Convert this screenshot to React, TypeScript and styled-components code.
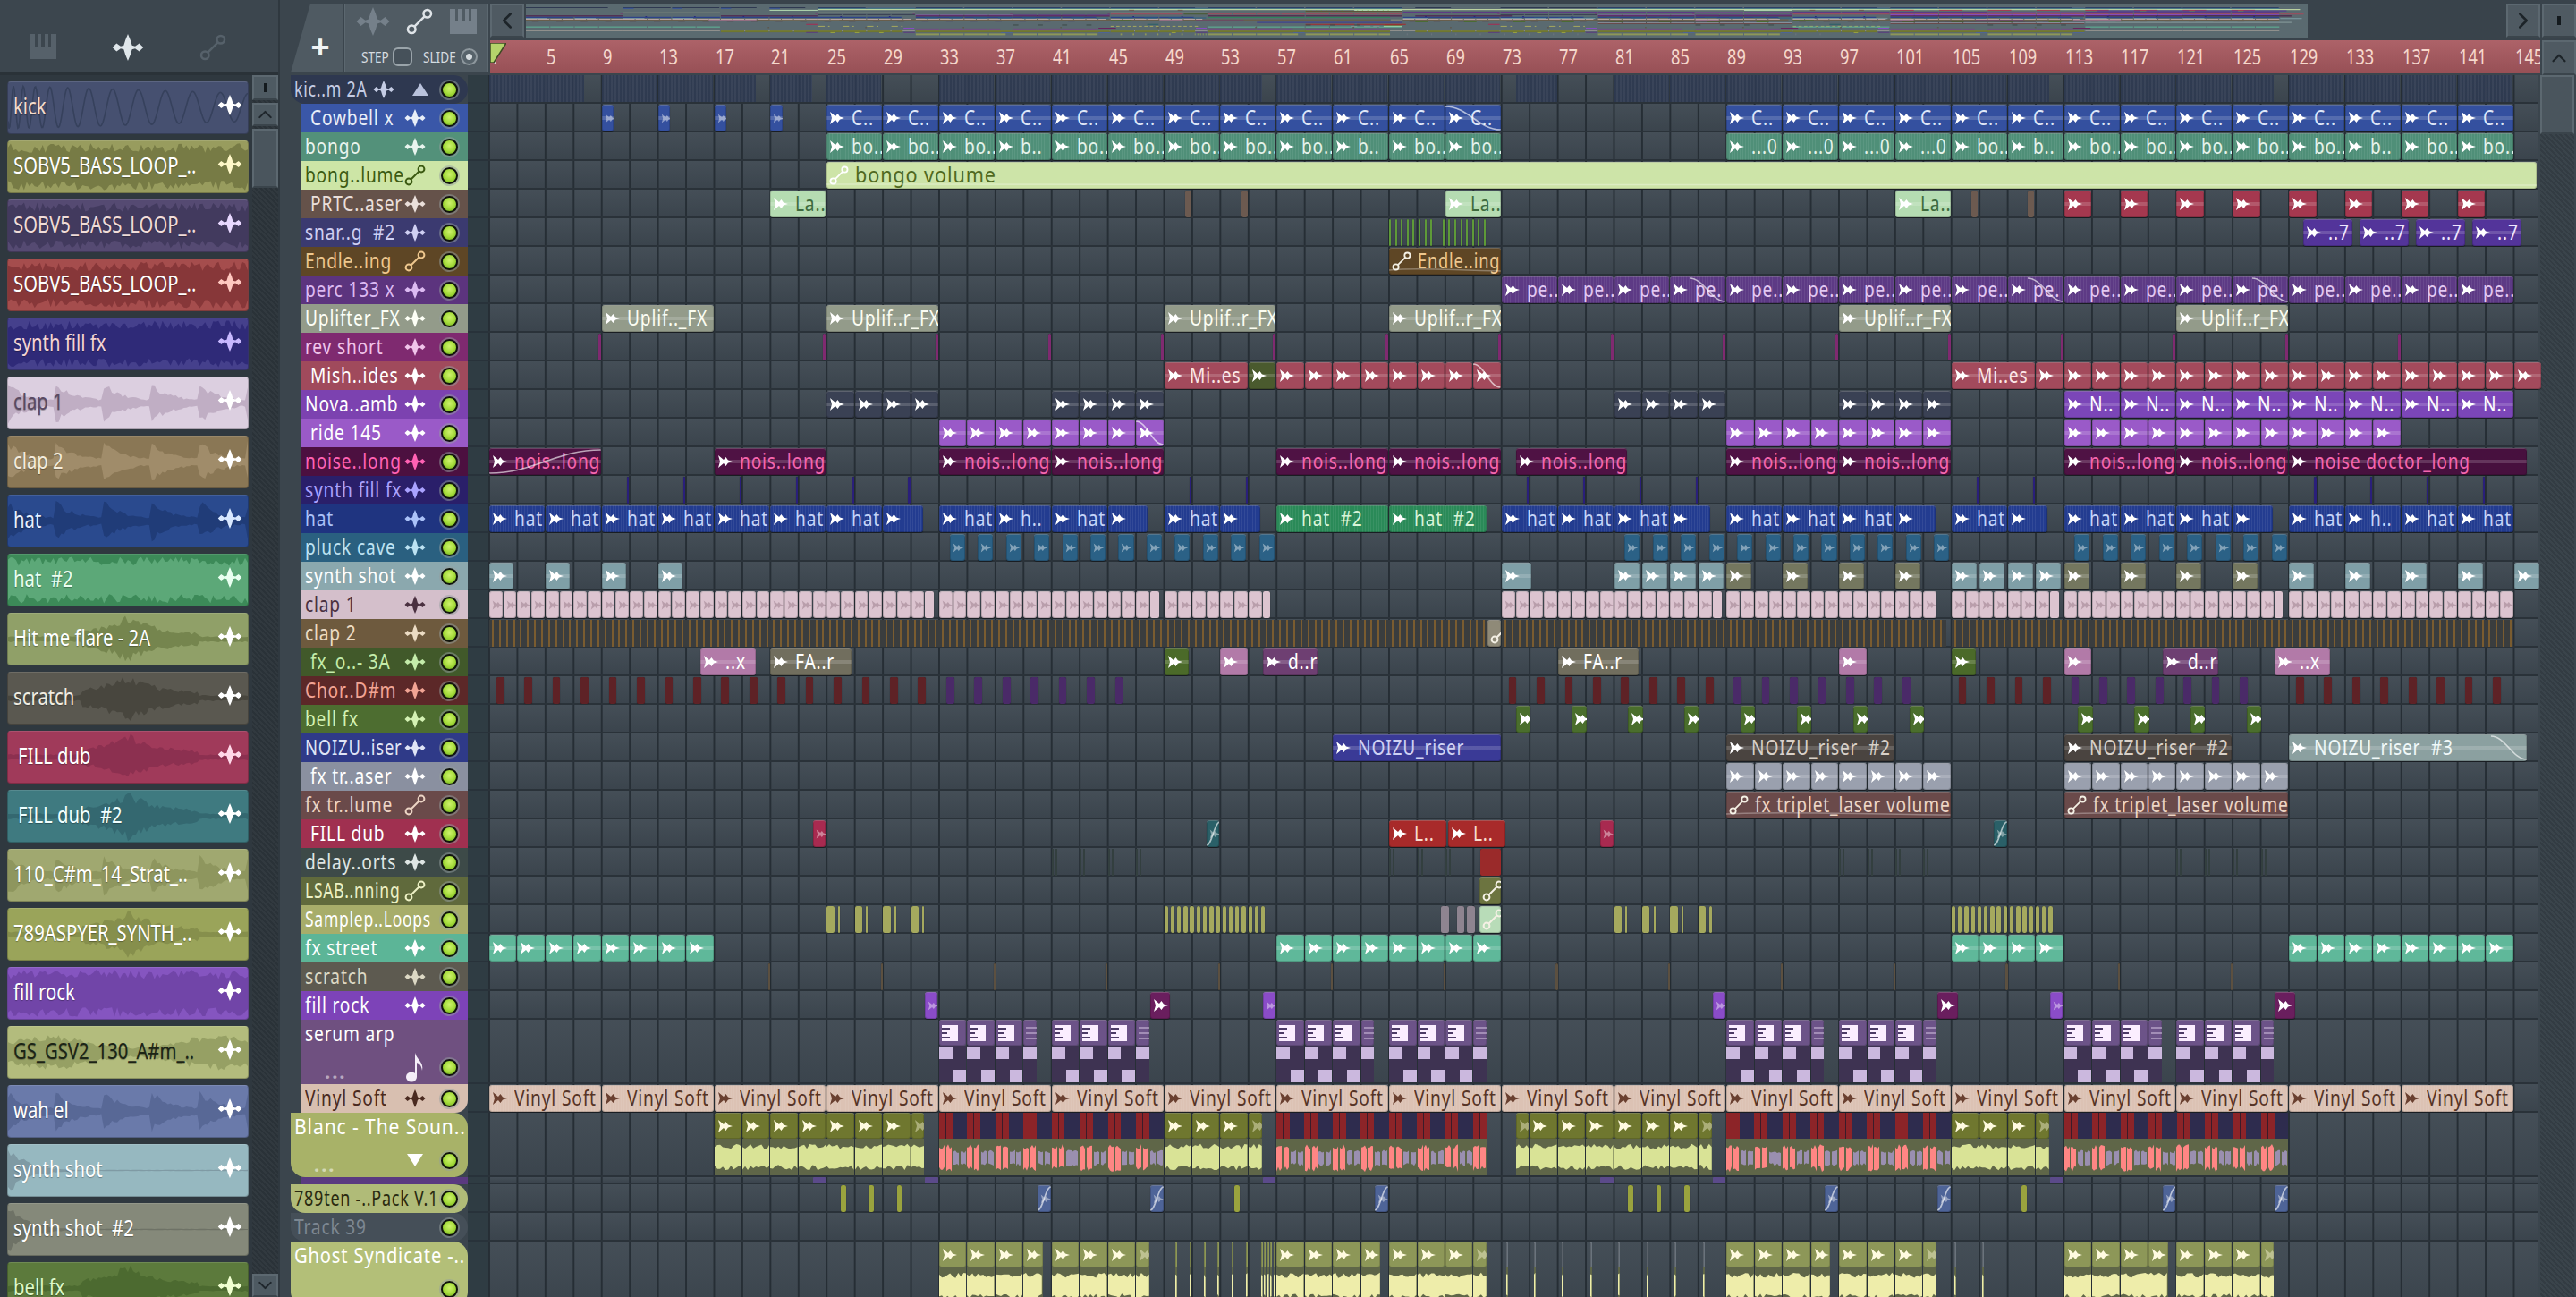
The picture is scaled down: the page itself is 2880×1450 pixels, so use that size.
import React, { FC } from 'react';
import styled, { createGlobalStyle } from 'styled-components';
import { ChevronDown, ChevronLeft, ChevronRight, ChevronUp } from 'lucide-react';

const BAR = 15.72;
const FONT = `'Noto Sans', 'Open Sans', sans-serif`;

type ClipKind = 'audio' | 'auto' | 'bar' | 'lines' | 'kick' | 'faint' | 'notes' | 'wave' | 'stripes' | 'tiny';
type CurveKind = 'down' | 'fall' | 'rise';

interface ClipData {
    b: number;
    l: number;
    t?: string;
    c?: string;
    f?: string;
    k?: ClipKind;
    curve?: CurveKind;
    dim?: boolean;
    sx?: number;
}

interface TrackData {
    name: string;
    sx?: number;
    bg: string;
    fg: string;
    icon?: 'wave' | 'auto' | 'note' | 'up' | 'down';
    indent?: boolean;
    group?: boolean;
    corner?: boolean;
    h?: number;
    dots?: boolean;
    clipBg?: string;
    clipFg?: string;
    tex?: 'stripes' | 'line';
    waveFill?: string;
    clips: ClipData[];
}

const rep = (b: number, n: number, step: number, l: number, extra: Partial<ClipData> = {}): ClipData[] =>
    Array.from({ length: n }, (_, i) => ({ b: b + i * step, l, ...extra }));

const at = (bars: number[], l: number, extra: Partial<ClipData> = {}): ClipData[] =>
    bars.map((b) => ({ b, l, ...extra }));

const labels = (b: number, names: string[], l: number): ClipData[] =>
    names.map((t, i) => ({ b: b + i * l, l, t }));

const RED = '#a5384f';
const TEAL = '#7f9fa7';
const OLIVE = '#74775f';
const PINK = '#b27aa8';
const GRAPE = '#6e3f72';
const DARK_GREEN = '#4b6a29';
const MAROON = '#5e2226';
const VIOLET = '#4a2a68';

const tracks: TrackData[] = [
    {
        name: 'kic..m 2A', sx: 0.74, bg: '#2e3850', fg: '#c4cce4', icon: 'up', group: true,
        clips: at([1], 6.8, { k: 'kick' }).concat(
            at([9, 13, 25, 33, 37, 41, 45, 49, 57, 61, 65, 69, 81, 85, 89, 93, 97, 101, 105, 113, 117, 121, 129, 133, 137, 141], 3.95, { k: 'kick' }),
            at([17, 21, 53, 74, 109, 125], 3, { k: 'kick' })
        )
    },
    {
        name: 'Cowbell x', bg: '#3a57a8', fg: '#e8eef8', indent: true, clipBg: '#34509f', clipFg: '#dfe7f8', tex: 'line',
        clips: [...at([9, 13, 17, 21], 0.92, { dim: true }), ...rep(25, 11, 4, 4, { t: 'C..' }), { b: 69, l: 4, t: 'C..', curve: 'fall' }, ...rep(89, 14, 4, 4, { t: 'C..' })]
    },
    {
        name: 'bongo', bg: '#53917a', fg: '#e8f4ee', clipBg: '#4f8f78', clipFg: '#e4f2ea', tex: 'stripes',
        clips: [
            ...labels(25, ['bo..', 'bo..', 'bo..', 'b..', 'bo..', 'bo..', 'bo..', 'bo..', 'bo..', 'b..', 'bo..', 'bo..'], 4),
            ...labels(89, ['...0', '...0', '...0', '...0', 'bo..', 'b..', 'bo..', 'bo..', 'bo..', 'bo..', 'bo..', 'b..', 'bo..', 'bo..'], 4)
        ]
    },
    {
        name: 'bong..lume', bg: '#cde5a6', fg: '#3c5a12', icon: 'auto', clipBg: '#cde4a8', clipFg: '#50691f',
        clips: [{ b: 25, l: 121.7, t: 'bongo volume', k: 'auto', sx: 0.9 }]
    },
    {
        name: 'PRTC..aser', bg: '#65524a', fg: '#eadfda', indent: true, clipBg: '#b5dcb2', clipFg: '#3e6a3e', tex: 'line',
        clips: [
            ...at([21, 69, 101], 4, { t: 'La..' }),
            ...at([50.5, 54.5, 106.4, 110.4], 0.5, { c: '#6c5a50', k: 'bar' }),
            ...rep(113, 8, 4, 2, { c: RED, f: '#fff' })
        ]
    },
    {
        name: 'snar..g  #2', bg: '#3b3a70', fg: '#cfcff2', clipBg: '#53349a', clipFg: '#efe6ff', tex: 'line',
        clips: [
            ...rep(65, 8, 0.42, 0.16, { c: '#5e9a38', k: 'bar' }),
            ...rep(68.8, 8, 0.42, 0.16, { c: '#5e9a38', k: 'bar' }),
            ...rep(130, 4, 4, 3.6, { t: '..7' })
        ]
    },
    {
        name: 'Endle..ing', bg: '#5e4625', fg: '#eec78e', icon: 'auto', clipBg: '#5e4625', clipFg: '#eec78e',
        clips: [{ b: 65, l: 8, t: 'Endle..ing', k: 'auto', sx: 0.76 }]
    },
    {
        name: 'perc 133 x', bg: '#5c347e', fg: '#dcbaf2', clipBg: '#5d3a85', clipFg: '#e2c8f2', tex: 'stripes',
        clips: rep(73, 18, 4, 4, { t: 'pe..' }).map((c) => (c.b === 85 || c.b === 109 || c.b === 125 ? { ...c, t: 'pe.', curve: 'down' as CurveKind } : c))
    },
    {
        name: 'Uplifter_FX', bg: '#939b8a', fg: '#fdfff6', clipBg: '#939b8a', clipFg: '#fbfdf2', tex: 'line',
        clips: [
            { b: 9, l: 8, t: 'Uplif.._FX' },
            ...at([25, 49, 65, 97, 121], 8, { t: 'Uplif..r_FX' })
        ]
    },
    {
        name: 'rev short', bg: '#7f2a70', fg: '#f0c4ea',
        clips: at([8.75, 24.75, 32.75, 40.75, 48.75, 56.75, 64.75, 72.75, 80.75, 88.75, 96.75, 104.75, 112.75, 120.75, 128.75, 136.75], 0.25, { c: '#7f2a70', k: 'bar' })
    },
    {
        name: 'Mish..ides', bg: '#a04a5c', fg: '#fff', indent: true, clipBg: '#a34a5c', clipFg: '#fbe6e6', tex: 'line',
        clips: [
            { b: 49, l: 6, t: 'Mi..es' }, { b: 55, l: 2, c: '#4a5a2e' },
            ...rep(57, 7, 2, 2), { b: 71, l: 2, curve: 'down' },
            { b: 105, l: 6, t: 'Mi..es' }, ...rep(111, 18, 2, 2)
        ]
    },
    {
        name: 'Nova..amb', bg: '#7c42b0', fg: '#fff', clipBg: '#3a4154', clipFg: '#d8dce8', tex: 'line',
        clips: [...rep(25, 4, 2, 2), ...rep(41, 4, 2, 2), ...rep(81, 4, 2, 2), ...rep(97, 4, 2, 2), ...rep(113, 8, 4, 4, { t: 'N..', c: '#7b46b8', f: '#fff' })]
    },
    {
        name: 'ride 145', bg: '#9a5ac8', fg: '#fff', indent: true, clipBg: '#9a5ac8', clipFg: '#fff', tex: 'line',
        clips: [...rep(33, 7, 2, 2), { b: 47, l: 2, curve: 'down' }, ...rep(89, 8, 2, 2), ...rep(113, 12, 2, 2)]
    },
    {
        name: 'noise..long', bg: '#4c1040', fg: '#ff62b4', clipBg: '#4f1244', clipFg: '#f566ae', tex: 'line',
        clips: [
            { b: 1, l: 8, t: 'nois..long', curve: 'rise' },
            ...at([17, 33, 41, 57, 65, 74, 89, 97, 113, 121], 8, { t: 'nois..long' }),
            { b: 129, l: 17, t: 'noise doctor_long', c: '#47103e' }
        ]
    },
    {
        name: 'synth fill fx', bg: '#2a1f6a', fg: '#aaa2ff',
        clips: at([10.8, 14.8, 18.8, 22.8, 26.8, 30.8, 50.8, 54.8, 74.8, 78.8, 82.8, 86.8, 106.8, 110.8, 130.8, 134.8, 138.8, 142.8], 0.2, { c: '#2a1f7a', k: 'bar' })
    },
    {
        name: 'hat', bg: '#1f3480', fg: '#aac2f8', clipBg: '#233c90', clipFg: '#c4d4f8', tex: 'stripes',
        clips: [
            ...labels(1, ['hat', 'hat', 'hat', 'hat', 'hat', 'hat', 'hat'], 4), { b: 29, l: 2.9 },
            ...labels(33, ['hat', 'h..', 'hat'], 4), { b: 45, l: 2.9 },
            { b: 49, l: 4, t: 'hat' }, { b: 53, l: 2.9 },
            { b: 57, l: 8, t: 'hat  #2', c: '#2a8a58', f: '#d8f4d8' }, { b: 65, l: 7, t: 'hat  #2', c: '#2a8a58', f: '#d8f4d8' },
            ...labels(73, ['hat', 'hat', 'hat'], 4), { b: 85, l: 2.9 },
            ...labels(89, ['hat', 'hat', 'hat'], 4), { b: 101, l: 2.9 },
            { b: 105, l: 4, t: 'hat' }, { b: 109, l: 2.9 },
            ...labels(113, ['hat', 'hat', 'hat'], 4), { b: 125, l: 2.9 },
            ...labels(129, ['hat', 'h..', 'hat', 'hat'], 4)
        ]
    },
    {
        name: 'pluck cave', bg: '#2a6080', fg: '#bce2f2', clipBg: '#2b6186', clipFg: '#bfe0ef',
        clips: [...rep(33.75, 12, 2, 1.15, { dim: true }), ...rep(81.75, 12, 2, 1.15, { dim: true }), ...rep(113.75, 8, 2, 1.15, { dim: true })]
    },
    {
        name: 'synth shot', bg: '#8ba8ae', fg: '#fff', clipBg: TEAL, clipFg: '#fff', tex: 'line',
        clips: [
            ...at([1, 5, 9, 13], 1.8), { b: 73, l: 2.15 }, ...at([81, 83, 85, 87], 1.85),
            ...at([89, 93, 97, 101], 1.85, { c: OLIVE }), ...at([105, 107, 109, 111], 1.85),
            ...at([113, 117, 121, 125], 1.85, { c: OLIVE }), ...at([129, 133, 137, 141, 145], 1.85)
        ]
    },
    {
        name: 'clap 1', bg: '#d4bfcb', fg: '#4a3040', clipBg: '#dcc4d0', clipFg: '#8a6a7a',
        clips: [...rep(1, 31, 1, 1, { dim: true }), { b: 32, l: 0.7, k: 'bar', c: '#dcc4d0' }, ...rep(33, 15, 1, 1, { dim: true }), { b: 48, l: 0.7, k: 'bar', c: '#dcc4d0' }, ...rep(49, 7, 1, 1, { dim: true }), { b: 56, l: 0.6, k: 'bar', c: '#dcc4d0' }, ...rep(73, 15, 1, 1, { dim: true }), { b: 88, l: 0.7, k: 'bar', c: '#dcc4d0' }, ...rep(89, 15, 1, 1, { dim: true }), ...rep(105, 7, 1, 1, { dim: true }), { b: 112, l: 0.7, k: 'bar', c: '#dcc4d0' }, ...rep(113, 15, 1, 1, { dim: true }), { b: 128, l: 0.6, k: 'bar', c: '#dcc4d0' }, ...rep(129, 16, 1, 1, { dim: true })]
    },
    {
        name: 'clap 2', bg: '#6e5a3e', fg: '#ecdcc4',
        clips: [{ b: 1, l: 71, k: 'lines' }, { b: 72, l: 1, k: 'auto', c: '#8f8a78' }, { b: 73, l: 31.7, k: 'lines' }, { b: 105, l: 40, k: 'lines' }]
    },
    {
        name: 'fx_o..- 3A', bg: '#41592a', fg: '#c4ecaa', indent: true, clipBg: PINK, clipFg: '#fff', tex: 'line',
        clips: [
            { b: 16, l: 4, t: '..x' }, { b: 21, l: 5.8, t: 'FA..r', c: '#716e5e' }, { b: 49, l: 1.8, c: DARK_GREEN },
            { b: 53, l: 2 }, { b: 56, l: 4, t: 'd..r', c: GRAPE }, { b: 77, l: 5.8, t: 'FA..r', c: '#716e5e' },
            { b: 97, l: 2 }, { b: 105, l: 1.8, c: DARK_GREEN }, { b: 113, l: 2 }, { b: 120, l: 4, t: 'd..r', c: GRAPE }, { b: 128, l: 4, t: '..x' }
        ]
    },
    {
        name: 'Chor..D#m', bg: '#5c2828', fg: '#f2a494',
        clips: [
            ...rep(1.5, 16, 2, 0.62, { c: MAROON, k: 'bar' }), ...rep(33.5, 7, 2, 0.62, { c: VIOLET, k: 'bar' }),
            ...rep(73.5, 8, 2, 0.62, { c: MAROON, k: 'bar' }), ...rep(89.5, 7, 2, 0.62, { c: VIOLET, k: 'bar' }),
            ...rep(105.5, 4, 2, 0.62, { c: MAROON, k: 'bar' }), ...rep(113.5, 7, 2, 0.62, { c: VIOLET, k: 'bar' }),
            ...rep(129.5, 8, 2, 0.62, { c: MAROON, k: 'bar' })
        ]
    },
    {
        name: 'bell fx', bg: '#4d6d30', fg: '#d4f2b4', clipBg: '#4a6e2c', clipFg: '#d8f0c0',
        clips: [...rep(74, 8, 4, 1.1), ...rep(114, 4, 4, 1.1)]
    },
    {
        name: 'NOIZU..iser', sx: 0.77, bg: '#2f3a88', fg: '#dfe4f6', clipBg: '#3a3a96', clipFg: '#cfd2f4', tex: 'line',
        clips: [
            { b: 61, l: 12, t: 'NOIZU_riser' },
            ...at([89, 113], 12, { t: 'NOIZU_riser  #2', c: '#4a4440', f: '#d8d0c8' }),
            { b: 129, l: 17, t: 'NOIZU_riser  #3', c: '#8ba0a0', f: '#f0f8f8', curve: 'down' }
        ]
    },
    {
        name: 'fx tr..aser', bg: '#8a90a0', fg: '#fff', indent: true, clipBg: '#9aa0ae', clipFg: '#fff', tex: 'line',
        clips: [...rep(89, 8, 2, 2), ...rep(113, 8, 2, 2)]
    },
    {
        name: 'fx tr..lume', bg: '#6a4a4a', fg: '#ecd4c4', icon: 'auto', clipBg: '#6a4a4a', clipFg: '#ecd4c4',
        clips: at([89, 113], 16, { t: 'fx triplet_laser volume', k: 'auto' })
    },
    {
        name: 'FILL dub', bg: '#a03050', fg: '#fff', indent: true, clipBg: '#a82a50', clipFg: '#f2c2d0',
        clips: [
            { b: 24, l: 1, dim: true }, { b: 52, l: 1, c: '#2a6068', dim: true, curve: 'rise' },
            { b: 65, l: 4.1, t: 'L..', c: '#a82a2a', f: '#f8dcd0' }, { b: 69.2, l: 4.1, t: 'L..', c: '#a82a2a', f: '#f8dcd0' },
            { b: 80, l: 1, dim: true }, { b: 108, l: 1, c: '#2a6068', dim: true, curve: 'rise' }
        ]
    },
    {
        name: 'delay..orts', bg: '#3d4a48', fg: '#dfe6e4',
        clips: [...at([41, 43, 45, 47, 65, 67, 69, 97, 99, 101, 103, 121, 123, 125, 127], 0.5, { k: 'faint' }), { b: 71.5, l: 1.5, c: '#9a2a2a', k: 'bar' }]
    },
    {
        name: 'LSAB..nning', sx: 0.73, bg: '#606a3c', fg: '#ecf0c4', icon: 'auto',
        clips: [{ b: 71.4, l: 1.6, k: 'auto', c: '#6c7440' }]
    },
    {
        name: 'Samplep..Loops', sx: 0.73, bg: '#a7ad6a', fg: '#fff', icon: undefined,
        clips: [
            ...at([25, 27, 29, 31, 81, 83, 85, 87], 0.6, { c: '#a5a95e', k: 'bar' }),
            ...at([25.8, 27.8, 29.8, 31.8, 81.8, 83.8, 85.8, 87.8], 0.2, { c: '#a5a95e', k: 'bar' }),
            ...rep(49, 16, 0.46, 0.34, { c: '#a5a95e', k: 'bar' }), ...rep(105, 16, 0.46, 0.34, { c: '#a5a95e', k: 'bar' }),
            ...at([68.7, 69.8, 70.55], 0.6, { c: '#8e8490', k: 'bar' }), { b: 71.4, l: 1.6, k: 'auto', c: '#b8dcb8' }
        ]
    },
    {
        name: 'fx street', bg: '#5cb597', fg: '#fff', clipBg: '#5fb89a', clipFg: '#fff', tex: 'line',
        clips: [...rep(1, 8, 2, 2), ...rep(57, 8, 2, 2), ...rep(105, 4, 2, 2), ...rep(129, 8, 2, 2)]
    },
    {
        name: 'scratch', bg: '#5d5a50', fg: '#dcd8c4',
        clips: rep(20.85, 14, 8, 0.2, { c: '#5c5040', k: 'bar' })
    },
    {
        name: 'fill rock', bg: '#7d43b8', fg: '#fff', clipBg: '#8a4cc8', clipFg: '#eadcf8',
        clips: [
            ...at([32, 56, 88, 112], 0.95, { dim: true }),
            ...at([48, 104, 128], 1.5, { c: '#6a1e5e', f: '#ffc4ec' })
        ]
    },
    {
        name: 'serum arp', bg: '#6f5080', fg: '#fff', icon: 'note', h: 72, dots: true,
        clips: [33, 41, 57, 65, 89, 97, 113, 121].flatMap((s) => [
            ...rep(s, 3, 2, 2, { k: 'notes' as ClipKind }),
            { b: s + 6, l: 1, k: 'notes' as ClipKind, dim: true }
        ])
    },
    {
        name: 'Vinyl Soft', bg: '#d8bfb0', fg: '#4a2a20', corner: true, clipBg: '#dcc2b4', clipFg: '#563426', tex: 'stripes',
        clips: rep(1, 18, 8, 8, { t: 'Vinyl Soft' })
    },
    {
        name: 'Blanc - The Soun..', sx: 0.88, bg: '#a8b268', fg: '#fff', icon: 'down', group: true, h: 72, dots: true,
        clipBg: '#6f772f', waveFill: '#d9e396',
        clips: [
            ...rep(17, 7, 2, 2, { k: 'wave' as ClipKind }), { b: 31, l: 1, k: 'wave', dim: true },
            { b: 33, l: 16, k: 'stripes' },
            ...rep(49, 3, 2, 2, { k: 'wave' as ClipKind }), { b: 55, l: 1, k: 'wave', dim: true },
            { b: 57, l: 15, k: 'stripes' },
            { b: 74, l: 1, k: 'wave', dim: true }, ...rep(75, 6, 2, 2, { k: 'wave' as ClipKind }), { b: 87, l: 1, k: 'wave', dim: true },
            { b: 89, l: 16, k: 'stripes' },
            ...rep(105, 3, 2, 2, { k: 'wave' as ClipKind }), { b: 111, l: 1, k: 'wave', dim: true },
            { b: 113, l: 16, k: 'stripes' }
        ]
    },
    {
        name: '', bg: '#5a3a80', fg: '#fff', h: 8,
        clips: at([24, 32, 56, 80, 88, 112], 1, { k: 'tiny' })
    },
    {
        name: '789ten -..Pack V.1', sx: 0.75, bg: '#b0bb78', fg: '#2a2a10', group: true, clipBg: '#4e6498', clipFg: '#dfe8f8',
        clips: [
            ...at([26, 28, 30, 54, 82, 84, 86, 110], 0.42, { c: '#9aa33e', k: 'bar' }),
            ...at([40, 48, 64, 96, 104, 120, 128], 1, { dim: true, curve: 'rise' })
        ]
    },
    { name: 'Track 39', bg: '#454f58', fg: '#7c8792', group: true, clips: [] },
    {
        name: 'Ghost Syndicate -..', sx: 0.84, bg: '#b3bf78', fg: '#fff', group: true, h: 72, dots: true,
        clipBg: '#8d9758', waveFill: '#eeedaa',
        clips: [
            ...[33, 57, 89, 113].flatMap((s) => [
                ...rep(s, 3, 2, 2, { k: 'wave' as ClipKind }), { b: s + 6, l: 1.45, k: 'wave' as ClipKind },
                ...rep(s + 8, 3, 2, 2, { k: 'wave' as ClipKind }), { b: s + 14, l: 1, k: 'wave' as ClipKind, dim: true }
            ]).filter((c) => c.b < 73 || c.b >= 89),
            ...at([49.8, 50.8, 51.8, 52.8, 53.8, 54.8], 0.2, { k: 'wave', c: '#8d9758' }),
            ...rep(55.9, 5, 0.22, 0.14, { k: 'wave', c: '#8d9758' }),
            ...at([73.3, 75.3, 77.3, 79.3, 81.3, 83.3, 85.3, 87.3, 105.2, 107.2], 0.16, { k: 'wave', c: '#6a737c' })
        ]
    }
];

const hash = (s: string) => s.split('').reduce((a, ch) => (a * 31 + ch.charCodeAt(0)) % 100003, 7) + 11;

const wavePath = (seed: number, w: number, h: number, env: (t: number) => number, step = 3) => {
    let s = seed;
    const rnd = () => {
        s = (s * 16807) % 2147483647;
        return s / 2147483647;
    };
    const top: string[] = [];
    const bottom: string[] = [];
    for (let x = 0; x <= w; x += step) {
        const t = x / w;
        const e = env(t) * h * 0.5;
        top.push(`${x} ${(h / 2 - e * (0.6 + 0.4 * rnd())).toFixed(1)}`);
        bottom.unshift(`${x} ${(h / 2 + e * (0.6 + 0.4 * rnd())).toFixed(1)}`);
    }
    return `M${top.join('L')}L${bottom.join('L')}Z`;
};

const envelopes: Record<string, (t: number) => number> = {
    full: () => 0.92,
    decay: (t) => Math.max(0.03, Math.exp(-t * 12)),
    hits: (t) => 0.1 + 0.75 * Math.exp(-((t * 5) % 1) * 2.6),
    swell: (t) => 0.45 + 0.25 * Math.sin(t * 9),
    flare: (t) => (t > 0.3 && t < 0.8 ? 0.2 + 0.8 * Math.exp(-Math.abs(t - 0.5) * 8) : 0.12),
    loud: () => 0.72,
    mid: () => 0.42
};

const WaveStyle = styled.svg`
    position: absolute;
    left: 0;
    top: 0;
    width: 100%;
    height: 100%;
`;

const WaveShape: FC<{ seed: number; w: number; h: number; env: string; fill: string; step?: number }> = ({ seed, w, h, env, fill, step }) => (
    <WaveStyle viewBox={`0 0 ${w} ${h}`} preserveAspectRatio="none">
        <path d={wavePath(seed, w, h, envelopes[env], step)} fill={fill} />
    </WaveStyle>
);

const SparkIcon: FC<{ color: string; w?: number; h?: number }> = ({ color, w = 24, h = 20 }) => (
    <svg width={w} height={h} viewBox="0 0 30 26" style={{ display: 'block', flexShrink: 0 }}>
        <path
            fill={color}
            d="M0 13 L4 9 L8 12 L11 11 L12.5 6 L15 0 L17.5 6 L19 11 L22 12 L26 9 L30 13 L26 17 L22 14 L19 15 L17.5 20 L15 26 L12.5 20 L11 15 L8 14 L4 17 Z"
        />
    </svg>
);

const AutoIcon: FC<{ color: string; size?: number }> = ({ color, size = 24 }) => (
    <svg width={size} height={size} viewBox="0 0 24 24" style={{ display: 'block', flexShrink: 0 }}>
        <circle cx="5" cy="19" r="3.4" fill="none" stroke={color} strokeWidth="2" />
        <circle cx="19" cy="5" r="3.4" fill="none" stroke={color} strokeWidth="2" />
        <path d="M7.5 16.5 L16.5 7.5" stroke={color} strokeWidth="2" />
    </svg>
);

const PianoIcon: FC<{ color: string; w?: number; h?: number }> = ({ color, w = 30, h = 28 }) => (
    <svg width={w} height={h} viewBox="0 0 30 28" style={{ display: 'block' }}>
        <path fill={color} d="M0 0H6V14H9V0H13V14H17V0H21V14H24V0H30V28H0Z" />
    </svg>
);

const ClipGlyph: FC<{ color: string; size?: number; faded?: boolean }> = ({ color, size = 18, faded }) => (
    <svg width={size} height={size} viewBox="0 0 18 18" style={{ display: 'block', flexShrink: 0, opacity: faded ? 0.42 : 1 }}>
        <path fill={color} d="M1 2 L7 7 L9.5 4 L12 7.5 L17 9 L12 10.5 L9.5 14 L7 11 L1 16 L3 9 Z" />
    </svg>
);

const PatternGlyph: FC<{ faded?: boolean }> = ({ faded }) => (
    <svg width="18" height="18" viewBox="0 0 18 18" style={{ display: 'block', flexShrink: 0, opacity: faded ? 0.5 : 1 }}>
        <rect width="18" height="18" fill={faded ? 'transparent' : '#fbeeff'} />
        {faded ? (
            <path d="M0 3H14M0 9H14M0 15H14" stroke="#d8c8e4" strokeWidth="2" />
        ) : (
            <path d="M0 4H9M0 9H6M0 14H9" stroke="#4c3a66" strokeWidth="2" />
        )}
    </svg>
);

const GlobalStyle = createGlobalStyle`
    html, body {
        margin: 0;
        padding: 0;
        background: #3b454d;
        overflow: hidden;
    }
    * {
        box-sizing: border-box;
    }
`;

const PageStyle = styled.div`
    width: 2880px;
    height: 1450px;
    display: flex;
    overflow: hidden;
    background: #3b454d;
    font-family: ${FONT};
`;

/* The app's font is condensed: squeeze a wider face so labels get the same width */
const NarrowStyle = styled.span<{ $x?: number }>`
    display: inline-block;
    white-space: pre;
    transform: scaleX(${(p) => p.$x || 0.8});
    transform-origin: 0 50%;
`;

const PickerStyle = styled.div`
    width: 311px;
    flex-shrink: 0;
    display: flex;
    flex-direction: column;
`;

const PickerTopStyle = styled.div`
    height: 84px;
    display: grid;
    grid-template-columns: 95px 95px 95px;
    justify-content: start;
    padding: 38px 0 0 0;
    justify-items: center;
    background: #3c464e;
    border-bottom: 3px solid #2a3238;
`;

const PickerBodyStyle = styled.div`
    flex: 1;
    min-height: 0;
    display: flex;
    background: #2f383f;
    overflow: hidden;
`;

const PickerListStyle = styled.div`
    width: 282px;
    padding: 7px 4px 0 8px;
    display: flex;
    flex-direction: column;
    gap: 7px;
`;

const PickerItemStyle = styled.div<{ $bg: string; $fg: string; $indent?: boolean }>`
    position: relative;
    flex-shrink: 0;
    height: 59px;
    display: flex;
    align-items: center;
    gap: 4px;
    padding: 0 6px 6px ${(p) => (p.$indent ? '11px' : '6px')};
    border-radius: 4px;
    overflow: hidden;
    color: ${(p) => p.$fg};
    background: ${(p) => p.$bg};
    border: 1px solid rgba(0, 0, 0, 0.22);
    border-top-color: rgba(255, 255, 255, 0.12);
`;

const PickerNameStyle = styled.span`
    position: relative;
    flex: 1;
    min-width: 0;
    overflow: hidden;
    font-size: 26px;
    line-height: 36px;
    text-shadow: 0 1px 1px rgba(0, 0, 0, 0.3);
`;

const PickerIconStyle = styled.span`
    position: relative;
`;

const SideScrollStyle = styled.div`
    width: 29px;
    display: flex;
    flex-direction: column;
    gap: 3px;
    background: repeating-linear-gradient(45deg, #31393f 0 2px, #2a3238 2px 4px);
`;

const ScrollButtonStyle = styled.div<{ $h: number; $tall?: boolean }>`
    height: ${(p) => p.$h}px;
    display: flex;
    align-items: center;
    justify-content: center;
    color: #1f262c;
    background: ${(p) => (p.$tall ? '#4a555d' : '#4e5a62')};
    border: 2px solid #5c6870;
    border-bottom-color: #3a444b;
    flex-shrink: 0;
`;

const PickDotStyle = styled.span`
    width: 4px;
    height: 10px;
    background: #141a1e;
`;

const SideSpacerStyle = styled.div`
    flex: 1;
`;

const MainStyle = styled.div`
    flex: 1;
    min-width: 0;
    display: flex;
    flex-direction: column;
    padding-left: 12px;
    border-left: 2px solid #2f383f;
`;

const TopAreaStyle = styled.div`
    height: 84px;
    display: flex;
    flex-shrink: 0;
`;

const ToolAreaStyle = styled.div`
    width: 221px;
    padding-top: 4px;
    padding-bottom: 3px;
    display: flex;
    gap: 2px;
    flex-shrink: 0;
`;

const PlusTabStyle = styled.div`
    width: 58px;
    flex-shrink: 0;
    display: flex;
    align-items: flex-end;
    justify-content: center;
    padding-bottom: 10px;
    padding-left: 8px;
    background: #4f5a62;
    clip-path: polygon(22px 0, 100% 0, 100% 100%, 0 100%);
    color: #f0f4f6;
    font-size: 36px;
    font-family: 'Liberation Sans', sans-serif;
    font-weight: 700;
    line-height: 1;
`;

const ToolPanelStyle = styled.div`
    flex: 1;
    min-width: 0;
    display: grid;
    grid-template-rows: 42px 1fr;
    background: #505b63;
    border: 1px solid #5c6870;
`;

const ToolIconsStyle = styled.div`
    display: flex;
    align-items: center;
    justify-content: space-between;
    padding: 0 11px 4px 12px;
`;

const ToolSwitchesStyle = styled.div`
    display: flex;
    align-items: center;
    padding: 0 0 0 18px;
    color: #d6dce0;
    font-size: 16px;
`;

const ToolLabelStyle = styled.span<{ $w: number }>`
    width: ${(p) => p.$w}px;
    flex-shrink: 0;
`;

const ToggleStyle = styled.span`
    width: 22px;
    height: 21px;
    flex-shrink: 0;
    margin: 0 12px 0 3px;
    border: 2px solid #9aa4aa;
    border-radius: 6px;
    background: #46515a;
`;

const RadioStyle = styled.span`
    width: 19px;
    height: 19px;
    flex-shrink: 0;
    margin-left: 6px;
    border-radius: 50%;
    border: 2px solid #8d979d;
    background: radial-gradient(circle, #d6dce0 0 3px, #57636b 4px);
`;

const TimeAreaStyle = styled.div`
    flex: 1;
    min-width: 0;
    display: flex;
    flex-direction: column;
    margin-left: 2px;
`;

const StripStyle = styled.div`
    height: 45px;
    padding-top: 4px;
    padding-bottom: 3px;
    display: flex;
    gap: 2px;
    background: #39434b;
`;

const ArrowButtonStyle = styled.div<{ $w?: number }>`
    width: ${(p) => p.$w || 38}px;
    flex-shrink: 0;
    display: flex;
    align-items: center;
    justify-content: center;
    color: #1d2429;
    background: #4f5a62;
    border: 2px solid #5c6870;
    border-bottom-color: #3b454c;
`;

const OverviewStyle = styled.svg`
    width: 1992px;
    height: 38px;
    flex-shrink: 0;
    background: #5a6a70;
`;

const StripGapStyle = styled.div`
    flex: 1;
`;

const RulerLineStyle = styled.div`
    display: flex;
    height: 39px;
    gap: 2px;
`;

const RulerStyle = styled.div`
    position: relative;
    width: 2292px;
    height: 37px;
    display: flex;
    overflow: hidden;
    background: linear-gradient(#ad6268, #975056);
    color: #f6d8cc;
    font-size: 24px;
    line-height: 35px;
`;

const RulerCellStyle = styled.span`
    flex: 0 0 ${BAR * 4}px;
`;

const MarkerStyle = styled.svg`
    position: absolute;
    left: 0;
    top: 3px;
`;

const BodyStyle = styled.div`
    flex: 1;
    min-height: 0;
    display: flex;
    gap: 2px;
    overflow: hidden;
`;

const RowsStyle = styled.div`
    width: 2513px;
    flex-shrink: 0;
    display: flex;
    flex-direction: column;
`;

const RowStyle = styled.div<{ $h: number }>`
    height: ${(p) => p.$h}px;
    flex-shrink: 0;
    display: flex;
`;

const HeaderCellStyle = styled.div<{ $bg: string; $fg: string; $group?: boolean; $indent?: boolean; $tall?: boolean; $corner?: boolean }>`
    width: ${(p) => (p.$group ? 198 : 187)}px;
    margin-left: ${(p) => (p.$group ? 0 : 11)}px;
    flex-shrink: 0;
    display: flex;
    flex-direction: ${(p) => (p.$tall ? 'column' : 'row')};
    align-items: ${(p) => (p.$tall ? 'stretch' : 'center')};
    padding-left: ${(p) => (p.$indent ? 11 : p.$group ? 4 : 5)}px;
    padding-right: ${(p) => (p.$tall ? 3 : 11)}px;
    color: ${(p) => p.$fg};
    background: ${(p) => p.$bg};
    border-radius: ${(p) => (p.$group ? '0 16px 16px 16px' : p.$corner ? '0 0 14px 0' : '0')};
    overflow: hidden;
    font-size: 24px;
    letter-spacing: 1px;
`;

const HeaderNameStyle = styled.span<{ $tall?: boolean; $fixed?: boolean }>`
    flex: ${(p) => (p.$fixed ? '0 0 88px' : p.$tall ? '0 0 32px' : '1')};
    min-width: 0;
    line-height: 29px;
    padding-bottom: 3px;
    overflow: hidden;
`;

const HeaderSlotStyle = styled.span<{ $nudge?: boolean }>`
    width: 24px;
    margin-left: ${(p) => (p.$nudge ? 17 : 0)}px;
    margin-right: ${(p) => (p.$nudge ? 11 : 17)}px;
    flex-shrink: 0;
    display: flex;
    justify-content: center;
`;

const HeaderFootStyle = styled.div`
    flex: 1;
    display: flex;
    align-items: center;
    padding-left: 22px;
    padding-right: 8px;
    padding-top: 2px;
    min-height: 0;
`;

const DotsStyle = styled.span`
    flex: 1;
    align-self: flex-end;
    margin-bottom: 8px;
    font-size: 22px;
    line-height: 14px;
    font-weight: 700;
    letter-spacing: 2px;
    opacity: 0.5;
`;

const LedStyle = styled.span`
    width: 19px;
    height: 19px;
    flex-shrink: 0;
    border-radius: 50%;
    border: 2px solid #10140c;
    background: radial-gradient(circle at 50% 40%, #cdf26c 0, #a6dc3c 50%, #68a818 100%);
    box-shadow: 0 0 0 2px rgba(150, 160, 160, 0.5);
`;

const MuteGutterStyle = styled.div`
    width: 23px;
    flex-shrink: 0;
    background: #2f3c43;
    border-bottom: 2px solid #28323a;
`;

const LaneStyle = styled.div`
    position: relative;
    width: 2292px;
    flex-shrink: 0;
    background-color: #3e4851;
    background-image:
        linear-gradient(to right, #262e35 0 2px, transparent 2px),
        linear-gradient(to bottom, rgba(255, 255, 255, 0.035), rgba(0, 0, 0, 0.05));
    background-size: ${BAR * 2}px 100%, 100% 100%;
    border-bottom: 2px solid #2a3239;
`;

const ClipStyle = styled.div<{ $bg: string; $fg: string; $tex?: string }>`
    position: absolute;
    top: 1px;
    height: 30px;
    display: flex;
    align-items: center;
    gap: 7px;
    padding-left: 3px;
    overflow: hidden;
    border-radius: 3px;
    color: ${(p) => p.$fg};
    background-color: ${(p) => p.$bg};
    background-image: ${(p) =>
        p.$tex === 'stripes'
            ? 'repeating-linear-gradient(90deg, rgba(255,255,255,.07) 0 1px, transparent 1px 3px)'
            : p.$tex === 'line'
            ? 'linear-gradient(transparent 44%, rgba(255,255,255,.16) 44% 56%, transparent 56%)'
            : 'none'};
    box-shadow: inset 0 1px 0 rgba(255, 255, 255, 0.22), inset 0 0 0 1px rgba(0, 0, 0, 0.16), 0 1px 1px rgba(0, 0, 0, 0.45);
    font-size: 24px;
    letter-spacing: 1px;
`;

const ClipLabelStyle = styled.span`
    position: relative;
    line-height: 27px;
    padding-bottom: 3px;
    min-width: 0;
`;

const BarClipStyle = styled.div<{ $bg: string }>`
    position: absolute;
    top: 1px;
    height: 30px;
    border-radius: 2px;
    background: ${(p) => p.$bg};
    box-shadow: 0 0 1px rgba(0, 0, 0, 0.6);
`;

const KickClipStyle = styled.div`
    position: absolute;
    top: 0;
    height: 30px;
    background: repeating-linear-gradient(90deg, #2c3850 0 2px, #38435a 2px 4px);
    opacity: 0.85;
`;

const FaintClipStyle = styled.div`
    position: absolute;
    top: 1px;
    height: 30px;
    background: repeating-linear-gradient(90deg, #333f3f 0 2px, transparent 2px 4px);
`;

const LinesClipStyle = styled.div`
    position: absolute;
    top: 1px;
    height: 30px;
    background-color: #3a3d3e;
    background-image: repeating-linear-gradient(90deg, transparent 0 3px, #7a5c30 3px 5px, transparent 5px ${BAR / 2}px);
`;

const CurveStyle = styled.svg<{ $full?: boolean }>`
    position: absolute;
    right: 0;
    top: 0;
    height: 100%;
    width: ${(p) => (p.$full ? '100%' : '40px')};
    max-width: 100%;
`;

const TallClipStyle = styled.div`
    position: absolute;
    top: 0;
    bottom: 0;
    display: flex;
    flex-direction: column;
    overflow: hidden;
`;

const TallTitleStyle = styled.div<{ $bg: string }>`
    height: 29px;
    flex-shrink: 0;
    display: flex;
    align-items: center;
    padding-left: 3px;
    background: ${(p) => p.$bg};
    border-radius: 3px;
    overflow: hidden;
    box-shadow: inset 0 1px 0 rgba(255, 255, 255, 0.2), inset 0 0 0 1px rgba(0, 0, 0, 0.14);
`;

const WaveBodyStyle = styled.div`
    position: relative;
    flex: 1;
    min-height: 0;
    background: #5f6648;
`;

const StripeTitleStyle = styled.div`
    height: 29px;
    flex-shrink: 0;
    background: repeating-linear-gradient(
        90deg,
        #8c2428 0 ${BAR / 2 - 1}px,
        #3a1c2a ${BAR / 2 - 1}px ${BAR / 2}px,
        #8c2428 ${BAR / 2}px ${BAR - 1}px,
        #2e2c4e ${BAR - 1}px ${BAR * 2}px
    );
`;

const NotesBodyStyle = styled.div`
    position: relative;
    flex: 1;
    display: grid;
    grid-template-rows: 14px 1fr 14px;
    padding-top: 1px;
    background: #3e3352;
`;

const NoteRowStyle = styled.div<{ $shift?: boolean }>`
    grid-row: ${(p) => (p.$shift ? 3 : 1)};
    width: ${BAR - 1}px;
    margin-left: ${(p) => (p.$shift ? BAR : 0)}px;
    background: #cbb8de;
`;

const TinyClipStyle = styled.div`
    position: absolute;
    top: 0;
    height: 7px;
    border-radius: 1px;
    background: #5b4a8a;
`;

const RightScrollStyle = styled.div`
    width: 38px;
    flex-shrink: 0;
    background: repeating-linear-gradient(45deg, #3a444b 0 2px, #333c43 2px 4px);
`;

const HeadArrow = (name: 'left' | 'right' | 'up' | 'down') => {
    if (name === 'left') return <ChevronLeft size={30} strokeWidth={2} />;
    if (name === 'right') return <ChevronRight size={30} strokeWidth={2} />;
    if (name === 'up') return <ChevronUp size={26} strokeWidth={2} />;
    return <ChevronDown size={26} strokeWidth={2} />;
};

const pickerItems: { name: string; bg: string; fg: string; wave: string; env: string; icon: string; indent?: boolean }[] = [
    { name: 'kick', bg: '#465070', fg: '#f4dccc', wave: '', env: 'kick', icon: '#fff' },
    { name: 'SOBV5_BASS_LOOP_..', bg: '#989c5e', fg: '#fff', wave: '#777b45', env: 'full', icon: '#fff8c8' },
    { name: 'SOBV5_BASS_LOOP_..', bg: '#554a72', fg: '#f0dcd8', wave: '#423a5e', env: 'full', icon: '#e8d8ff' },
    { name: 'SOBV5_BASS_LOOP_..', bg: '#a54d4d', fg: '#fff', wave: '#873739', env: 'full', icon: '#ffc8c0' },
    { name: 'synth fill fx', bg: '#45408c', fg: '#f4d4d4', wave: '#2f2a78', env: 'full', icon: '#c8b8ff' },
    { name: 'clap 1', bg: '#dccfe0', fg: '#5a4a62', wave: '#c0aec4', env: 'hits', icon: '#fff' },
    { name: 'clap 2', bg: '#8a7755', fg: '#f4ecdc', wave: '#a08c6a', env: 'hits', icon: '#fff' },
    { name: 'hat', bg: '#2a4a8e', fg: '#e8f0ff', wave: '#203c78', env: 'hits', icon: '#d8e8ff' },
    { name: 'hat  #2', bg: '#3c8a58', fg: '#eafff0', wave: '#5ca878', env: 'full', icon: '#e8fff0' },
    { name: 'Hit me flare - 2A', bg: '#90a068', fg: '#fff', wave: '#75854e', env: 'flare', icon: '#fff' },
    { name: 'scratch', bg: '#5a5850', fg: '#f0ece0', wave: '#48463e', env: 'flare', icon: '#fff' },
    { name: 'FILL dub', bg: '#a03a5a', fg: '#fff', wave: '#8c3050', env: 'flare', icon: '#ffd8e8', indent: true },
    { name: 'FILL dub  #2', bg: '#3f7a80', fg: '#f0ffff', wave: '#346870', env: 'flare', icon: '#fff', indent: true },
    { name: '110_C#m_14_Strat_..', bg: '#a0a870', fg: '#fff', wave: '#8e965e', env: 'hits', icon: '#fff' },
    { name: '789ASPYER_SYNTH_..', bg: '#9aa45a', fg: '#fff', wave: '#868f4c', env: 'flare', icon: '#fff' },
    { name: 'fill rock', bg: '#8555c0', fg: '#fff', wave: '#7145a8', env: 'full', icon: '#fff' },
    { name: 'GS_GSV2_130_A#m_..', bg: '#b3bc7d', fg: '#1c2416', wave: '#96a064', env: 'swell', icon: '#fff' },
    { name: 'wah el', bg: '#6a7aaa', fg: '#fff', wave: '#586896', env: 'hits', icon: '#fff' },
    { name: 'synth shot', bg: '#96b8c0', fg: '#fff', wave: '#7f9aa4', env: 'decay', icon: '#fff' },
    { name: 'synth shot  #2', bg: '#85897a', fg: '#fff', wave: '#6e7266', env: 'decay', icon: '#fff' },
    { name: 'bell fx', bg: '#5c7a3c', fg: '#dcf8c8', wave: '#4c6a30', env: 'flare', icon: '#f0ffd0' }
];

const kickLine = () => {
    const pts: string[] = [];
    let phase = 0;
    for (let x = 0; x <= 270; x += 1) {
        const t = x / 270;
        phase += 0.5 * Math.exp(-t * 7) + 0.2;
        pts.push(`${x} ${(29 + 25 * (1 - t * 0.35) * Math.sin(phase)).toFixed(1)}`);
    }
    return `M${pts.join('L')}`;
};

const Picker: FC = () => (
    <PickerStyle>
        <PickerTopStyle>
            <PianoIcon color="#56616a" />
            <SparkIcon color="#dfe6ea" w={40} h={30} />
            <AutoIcon color="#56616a" size={30} />
        </PickerTopStyle>
        <PickerBodyStyle>
            <PickerListStyle>
                {pickerItems.map((item, i) => (
                    <PickerItemStyle key={i} $bg={item.bg} $fg={item.fg} $indent={item.indent}>
                        {item.env === 'kick' ? (
                            <WaveStyle viewBox="0 0 270 59" preserveAspectRatio="none">
                                <path d={kickLine()} fill="none" stroke="#36415c" strokeWidth="1.6" />
                            </WaveStyle>
                        ) : (
                            <WaveShape seed={hash(item.name) + i} w={270} h={59} env={item.env} fill={item.wave} />
                        )}
                        <PickerNameStyle>
                            <NarrowStyle $x={0.78}>{item.name}</NarrowStyle>
                        </PickerNameStyle>
                        <PickerIconStyle>
                            <SparkIcon color={item.icon} w={28} h={23} />
                        </PickerIconStyle>
                    </PickerItemStyle>
                ))}
            </PickerListStyle>
            <SideScrollStyle>
                <ScrollButtonStyle $h={28}>
                    <PickDotStyle />
                </ScrollButtonStyle>
                <ScrollButtonStyle $h={26}>{HeadArrow('up')}</ScrollButtonStyle>
                <ScrollButtonStyle $h={66} $tall />
                <SideSpacerStyle />
                <ScrollButtonStyle $h={26}>{HeadArrow('down')}</ScrollButtonStyle>
            </SideScrollStyle>
        </PickerBodyStyle>
    </PickerStyle>
);

const Overview: FC = () => {
    const total = tracks.reduce((sum, t) => sum + (t.h || 32), 0);
    let y = 0;
    return (
        <OverviewStyle viewBox="0 0 1992 38">
            {tracks.map((track, i) => {
                const h = track.h || 32;
                const rowY = 4 + (y / total) * 31;
                y += h;
                return track.clips.map((c, j) => (
                    <rect
                        key={`${i}-${j}`}
                        x={(c.b - 1) * 13.62}
                        y={rowY}
                        width={Math.max(1, c.l * 13.62 - 1)}
                        height={h > 32 ? 2 : 1}
                        fill={c.c || track.clipBg || track.bg}
                    />
                ));
            })}
        </OverviewStyle>
    );
};

const curvePaths: Record<CurveKind, string> = {
    down: 'M0 2 C16 2 24 28 40 28',
    fall: 'M0 2 C16 2 24 28 40 28',
    rise: 'M0 28 C16 28 24 2 40 2'
};

const ClipView: FC<{ clip: ClipData; track: TrackData; seed: number }> = ({ clip, track, seed }) => {
    const left = (clip.b - 1) * BAR + 1;
    const width = Math.max(2, clip.l * BAR - 1);
    const box = { left, width };
    const kind = clip.k || 'audio';
    const bg = clip.c || track.clipBg || track.bg;
    const fg = clip.f || track.clipFg || track.fg;

    if (kind === 'bar') return <BarClipStyle $bg={bg} style={box} />;
    if (kind === 'kick') return <KickClipStyle style={box} />;
    if (kind === 'faint') return <FaintClipStyle style={box} />;
    if (kind === 'lines') return <LinesClipStyle style={box} />;
    if (kind === 'tiny') return <TinyClipStyle style={box} />;

    if (kind === 'notes') {
        return (
            <TallClipStyle style={box}>
                <TallTitleStyle $bg="#6c5388">
                    <PatternGlyph faded={clip.dim} />
                </TallTitleStyle>
                <NotesBodyStyle>
                    <NoteRowStyle />
                    {!clip.dim && <NoteRowStyle $shift />}
                </NotesBodyStyle>
            </TallClipStyle>
        );
    }

    if (kind === 'wave') {
        const wide = clip.l >= 1;
        return (
            <TallClipStyle style={box}>
                <TallTitleStyle $bg={bg}>{wide && <ClipGlyph color="#fffbe0" faded={clip.dim} />}</TallTitleStyle>
                <WaveBodyStyle>
                    <WaveShape seed={seed} w={Math.max(4, Math.round(width))} h={43} env="loud" fill={track.waveFill || '#d9e396'} />
                </WaveBodyStyle>
            </TallClipStyle>
        );
    }

    if (kind === 'stripes') {
        return (
            <TallClipStyle style={box}>
                <StripeTitleStyle />
                <WaveBodyStyle>
                    {Array.from({ length: Math.floor(clip.l * 2) }, (_, i) => (
                        <StripeSegment key={i} index={i} seed={seed + i * 13} />
                    ))}
                </WaveBodyStyle>
            </TallClipStyle>
        );
    }

    if (kind === 'auto') {
        return (
            <ClipStyle $bg={bg} $fg={fg} style={box}>
                <AutoIcon color={fg === '#50691f' ? '#fff' : '#f4f0e4'} size={clip.t ? 22 : 24} />
                {clip.t && (
                    <ClipLabelStyle>
                        <NarrowStyle $x={clip.sx}>{clip.t}</NarrowStyle>
                    </ClipLabelStyle>
                )}
                {clip.t && (
                    <CurveStyle $full viewBox="0 0 100 30" preserveAspectRatio="none">
                        <path d="M0 25 C30 21 60 26 100 26" fill="none" stroke="rgba(255,255,255,.3)" strokeWidth="1.5" vectorEffect="non-scaling-stroke" />
                    </CurveStyle>
                )}
            </ClipStyle>
        );
    }

    const showIcon = clip.l >= 0.8;
    const glyphColor = track.name === 'Vinyl Soft' ? '#6a4030' : track.name === 'clap 1' ? '#8a6a7a' : '#fff';
    return (
        <ClipStyle $bg={bg} $fg={fg} $tex={track.tex} style={box}>
            {showIcon && <ClipGlyph color={glyphColor} size={clip.dim ? 13 : 18} faded={clip.dim} />}
            {clip.t && (
                <ClipLabelStyle>
                    <NarrowStyle $x={clip.sx}>{clip.t}</NarrowStyle>
                </ClipLabelStyle>
            )}
            {clip.curve && (
                <CurveStyle $full={clip.curve !== 'down'} viewBox="0 0 40 30" preserveAspectRatio="none">
                    <path d={curvePaths[clip.curve]} fill="none" stroke="rgba(255,255,255,.62)" strokeWidth="1.6" vectorEffect="non-scaling-stroke" />
                </CurveStyle>
            )}
        </ClipStyle>
    );
};

const StripeSegment: FC<{ index: number; seed: number }> = ({ index, seed }) => {
    const pink = index % 4 < 2;
    return (
        <svg
            width={BAR / 2}
            height={43}
            viewBox={`0 0 ${BAR / 2} 43`}
            style={{ position: 'absolute', left: (index * BAR) / 2, top: 0 }}
        >
            <path d={wavePath(seed, BAR / 2, 43, envelopes[pink ? 'loud' : 'mid'], 2)} fill={pink ? '#ff8684' : '#9a8fb0'} />
        </svg>
    );
};

const HeaderIcon: FC<{ track: TrackData }> = ({ track }) => {
    const { icon, fg } = track;
    if (icon === 'auto') return <AutoIcon color={fg} size={24} />;
    if (icon === 'note') {
        return (
            <svg width="22" height="36" viewBox="0 0 22 36" style={{ display: 'block' }}>
                <ellipse cx="7" cy="29" rx="6" ry="5.5" fill="#f4eef8" />
                <path d="M11 29 V2 C13 10 21 12 19 22 C18 15 15 14 13 13 V29 Z" fill="#f4eef8" />
            </svg>
        );
    }
    if (icon === 'up' || icon === 'down') {
        return (
            <svg width="18" height="14" viewBox="0 0 18 14" style={{ display: 'block' }}>
                <path d={icon === 'up' ? 'M9 0 L18 14 H0 Z' : 'M0 0 H18 L9 14 Z'} fill={icon === 'up' ? '#b9c2dc' : '#fff'} />
            </svg>
        );
    }
    return <SparkIcon color={fg} w={24} h={20} />;
};

const TrackHeader: FC<{ track: TrackData }> = ({ track }) => {
    const tall = (track.h || 32) > 32;
    if (track.h === 8) return <HeaderCellStyle $bg={track.bg} $fg={track.fg} />;
    const hasSlot = track.icon !== undefined || (!track.group && track.name !== 'Samplep..Loops');

    if (tall) {
        return (
            <HeaderCellStyle $bg={track.bg} $fg={track.fg} $group={track.group} $tall>
                <HeaderNameStyle $tall>
                    <NarrowStyle $x={track.sx}>{track.name}</NarrowStyle>
                </HeaderNameStyle>
                <HeaderFootStyle>
                    <DotsStyle>...</DotsStyle>
                    {track.icon && (
                        <HeaderSlotStyle>
                            <HeaderIcon track={track} />
                        </HeaderSlotStyle>
                    )}
                    <LedStyle />
                </HeaderFootStyle>
            </HeaderCellStyle>
        );
    }

    if (track.icon === 'up') {
        return (
            <HeaderCellStyle $bg={track.bg} $fg={track.fg} $group>
                <HeaderNameStyle $fixed>
                    <NarrowStyle $x={track.sx}>{track.name}</NarrowStyle>
                </HeaderNameStyle>
                <SparkIcon color="#c4cce4" w={24} h={20} />
                <HeaderSlotStyle $nudge>
                    <HeaderIcon track={track} />
                </HeaderSlotStyle>
                <LedStyle />
            </HeaderCellStyle>
        );
    }

    return (
        <HeaderCellStyle $bg={track.bg} $fg={track.fg} $group={track.group} $indent={track.indent} $corner={track.corner}>
            <HeaderNameStyle>
                <NarrowStyle $x={track.sx}>{track.name}</NarrowStyle>
            </HeaderNameStyle>
            {hasSlot && (
                <HeaderSlotStyle>
                    <HeaderIcon track={track} />
                </HeaderSlotStyle>
            )}
            <LedStyle />
        </HeaderCellStyle>
    );
};

const rulerBars = Array.from({ length: 37 }, (_, i) => 1 + i * 4);

const App: FC = () => (
    <PageStyle>
        <GlobalStyle />
        <Picker />
        <MainStyle>
            <TopAreaStyle>
                <ToolAreaStyle>
                    <PlusTabStyle>+</PlusTabStyle>
                    <ToolPanelStyle>
                        <ToolIconsStyle>
                            <SparkIcon color="#75808a" w={38} h={32} />
                            <AutoIcon color="#dfe4e8" size={30} />
                            <PianoIcon color="#75808a" w={32} h={28} />
                        </ToolIconsStyle>
                        <ToolSwitchesStyle>
                            <ToolLabelStyle $w={32}>
                                <NarrowStyle $x={0.85}>STEP</NarrowStyle>
                            </ToolLabelStyle>
                            <ToggleStyle />
                            <ToolLabelStyle $w={36}>
                                <NarrowStyle $x={0.85}>SLIDE</NarrowStyle>
                            </ToolLabelStyle>
                            <RadioStyle />
                        </ToolSwitchesStyle>
                    </ToolPanelStyle>
                </ToolAreaStyle>
                <TimeAreaStyle>
                    <StripStyle>
                        <ArrowButtonStyle>{HeadArrow('left')}</ArrowButtonStyle>
                        <Overview />
                        <StripGapStyle />
                        <ArrowButtonStyle>{HeadArrow('right')}</ArrowButtonStyle>
                        <ArrowButtonStyle>
                            <PickDotStyle />
                        </ArrowButtonStyle>
                    </StripStyle>
                    <RulerLineStyle>
                        <RulerStyle>
                            {rulerBars.map((bar) => (
                                <RulerCellStyle key={bar}>
                                    <NarrowStyle $x={0.76}>{bar}</NarrowStyle>
                                </RulerCellStyle>
                            ))}
                            <MarkerStyle width="18" height="22" viewBox="0 0 18 22">
                                <path d="M0 0 H18 L4 22 H0 Z" fill="#b5d36b" stroke="#3d4a24" strokeWidth="1.5" />
                            </MarkerStyle>
                        </RulerStyle>
                        <ArrowButtonStyle>{HeadArrow('up')}</ArrowButtonStyle>
                    </RulerLineStyle>
                </TimeAreaStyle>
            </TopAreaStyle>
            <BodyStyle>
                <RowsStyle>
                    {tracks.map((track, i) => (
                        <RowStyle key={i} $h={track.h || 32}>
                            <TrackHeader track={track} />
                            <MuteGutterStyle />
                            <LaneStyle>
                                {track.clips.map((clip, j) => (
                                    <ClipView key={j} clip={clip} track={track} seed={hash(track.name) + j * 97 + 5} />
                                ))}
                            </LaneStyle>
                        </RowStyle>
                    ))}
                </RowsStyle>
                <RightScrollStyle>
                    <ScrollButtonStyle $h={66} $tall />
                </RightScrollStyle>
            </BodyStyle>
        </MainStyle>
    </PageStyle>
);

export default App;
